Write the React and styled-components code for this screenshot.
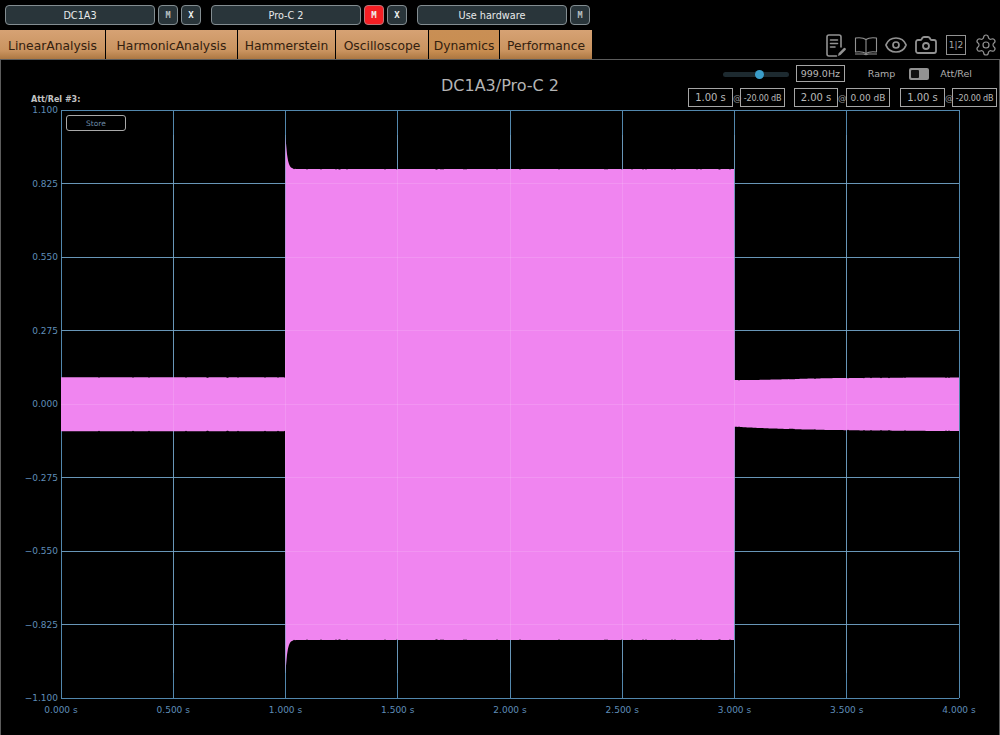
import React from "react";
import styled, { createGlobalStyle } from "styled-components";
import { Eye, Camera, Settings } from "lucide-react";

const GlobalStyle = createGlobalStyle`
  html, body {
    margin: 0;
    background: #000;
    overflow: hidden;
  }
  body {
    font-family: "DejaVu Sans", "Liberation Sans", sans-serif;
  }
`;

const Page = styled.div`
  width: 1000px;
  height: 735px;
  display: flex;
  flex-direction: column;
  background: #000;
`;

const TopBar = styled.div`
  display: flex;
  gap: 10px;
  padding: 5px 5px 0;
  height: 25px;
`;

const Group = styled.div`
  display: flex;
  gap: 3px;
`;

const WideButton = styled.div`
  box-sizing: border-box;
  width: 150px;
  height: 20px;
  display: flex;
  align-items: center;
  justify-content: center;
  background: #29353a;
  border: 1px solid #838d91;
  border-radius: 4px;
  color: #e8eaea;
  font-size: 9.7px;
  font-weight: 500;
`;

const SmallButton = styled(WideButton)`
  width: 20px;
  background: ${(p) => (p.$on ? "#f51f24" : "#29353a")};
  border-color: ${(p) => (p.$on ? "#b8777a" : "#838d91")};
  color: ${(p) => (p.$dim ? "#b9c0c2" : "#eef0f0")};
  font-family: "DejaVu Sans Mono", monospace;
  font-size: ${(p) => (p.$dim ? 8.5 : 9)}px;
  font-weight: 700;
`;

const TabBar = styled.div`
  height: 30px;
  display: flex;
  align-items: flex-start;
  justify-content: space-between;
  box-sizing: border-box;
`;

const Tabs = styled.div`
  display: flex;
  gap: 1px;
`;

const Tab = styled.div`
  box-sizing: border-box;
  width: ${(p) => p.$w}px;
  height: 30px;
  padding-top: 1px;
  display: flex;
  align-items: center;
  justify-content: center;
  color: #33200f;
  font-size: 12.3px;
  background: ${(p) =>
    p.$active
      ? "linear-gradient(#c98f55, #c88d50 70%, #a8743f)"
      : "linear-gradient(#d6a274, #c9935f 70%, #a9743f)"};
`;

const Tools = styled.div`
  display: flex;
  align-items: center;
  gap: 6px;
  height: 30px;
  padding-right: 2px;
  color: #929292;
`;

const PageIndex = styled.div`
  box-sizing: border-box;
  width: 20px;
  height: 20px;
  border: 1.5px solid #929292;
  display: flex;
  align-items: center;
  justify-content: center;
  font-size: 9px;
  color: #a5a5a5;
  margin: 0 2px;
`;

const Panel = styled.div`
  flex: 1;
  box-sizing: border-box;
  border: 1px solid #5c5c5c;
  border-bottom: none;
  margin-top: -1px;
  display: flex;
  flex-direction: column;
  min-height: 0;
`;

const Header = styled.div`
  height: 50px;
  display: grid;
  grid-template-columns: 1fr auto 1fr;
`;

const ChannelLabel = styled.div`
  align-self: end;
  padding: 0 0 6px 30px;
  font-size: 8px;
  font-weight: 700;
  color: #c4c4c4;
`;

const Title = styled.div`
  align-self: center;
  font-size: 16px;
  color: #b4b4b4;
`;

const Controls = styled.div`
  justify-self: end;
  display: flex;
  flex-direction: column;
  align-items: flex-end;
  gap: 6px;
  padding: 5px 2px 0 0;
`;

const ToneRow = styled.div`
  display: flex;
  align-items: center;
  height: 17px;
  padding-right: 25px;
  color: #aeaeae;
  font-size: 9.5px;
`;

const Track = styled.div`
  position: relative;
  width: 66px;
  height: 5px;
  border-radius: 3px;
  background: #1d2a30;
  margin: 1px 7px 0 0;
`;

const Thumb = styled.div`
  position: absolute;
  left: 32px;
  top: -2px;
  width: 9px;
  height: 9px;
  border-radius: 50%;
  background: #3a9dc9;
`;

const Field = styled.div`
  box-sizing: border-box;
  width: ${(p) => p.$w}px;
  height: ${(p) => p.$h || 19}px;
  border: 1px solid #a5a5a5;
  display: flex;
  align-items: center;
  justify-content: center;
  color: #b8b8b8;
  font-size: ${(p) => p.$size || 10}px;
  white-space: nowrap;
`;

const NarrowField = styled(Field)`
  font-family: "DejaVu Sans Condensed", "Liberation Sans Narrow", sans-serif;
  font-stretch: condensed;
  letter-spacing: -0.2px;
`;

const Caption = styled.span`
  margin: ${(p) => p.$margin};
`;

const Toggle = styled.div`
  box-sizing: border-box;
  width: 20px;
  height: 12px;
  border-radius: 2px;
  background: #929292;
  padding: 2px 0 2px 2px;
  margin-right: 11px;
`;

const ToggleKnob = styled.div`
  width: 8px;
  height: 100%;
  border-radius: 1px;
  background: #111;
`;

const ParamRow = styled.div`
  display: flex;
  align-items: center;
`;

const At = styled.span`
  width: ${(p) => p.$w || 7}px;
  text-align: center;
  font-size: 8.5px;
  color: #9a9a9a;
`;

const ChartArea = styled.div`
  position: relative;
  flex: 1;
  min-height: 0;
`;

const Store = styled.div`
  position: absolute;
  left: 65px;
  top: 5px;
  box-sizing: border-box;
  width: 60px;
  height: 16px;
  border: 1px solid #a9a9a9;
  border-radius: 3px;
  display: flex;
  align-items: center;
  justify-content: center;
  font-size: 7.5px;
  color: #6d8ba6;
`;

const ChartSvg = styled.svg`
  display: block;
  overflow: visible;
  font-family: "DejaVu Sans", sans-serif;
  font-size: 9px;
`;

const TOP_BUTTONS = [
  { name: "DC1A3", small: [{ t: "M" }, { t: "X" }] },
  { name: "Pro-C 2", small: [{ t: "M", on: true }, { t: "X" }] },
  { name: "Use hardware", small: [{ t: "M" }] },
];

const TABS = [
  ["LinearAnalysis", 105],
  ["HarmonicAnalysis", 131],
  ["Hammerstein", 97],
  ["Oscilloscope", 92],
  ["Dynamics", 70],
  ["Performance", 92],
];

const X_LINES = [61, 173.25, 285.5, 397.75, 510, 622.25, 734.5, 846.75, 959];
const X_LABELS = ["0.000 s", "0.500 s", "1.000 s", "1.500 s", "2.000 s", "2.500 s", "3.000 s", "3.500 s", "4.000 s"];
const Y_LINES = [110, 183.5, 257, 330.5, 404, 477.5, 551, 624.5, 698];
const Y_LABELS = ["1.100", "0.825", "0.550", "0.275", "0.000", "\u22120.275", "\u22120.550", "\u22120.825", "\u22121.100"];

// upper and lower edge of the signal at a given x
function edges(x) {
  if (x < 285.5) return [377.3, 431.3];
  if (x < 734.5) {
    const spike = 34 * Math.exp(-(x - 285.5) / 1.8);
    return [169 - spike, 640 + spike];
  }
  const t = (x - 734.5) / 224.5;
  const dip = 1.6 * Math.exp(-Math.pow((t - 0.07) / 0.25, 2));
  return [378.4 - t + dip, 426.7 + 4.5 * (1 - Math.exp(-t * 3))];
}

function wavePath() {
  const top = [];
  const bottom = [];
  let seed = 7;
  const rnd = () => {
    seed = (seed * 16807) % 2147483647;
    return seed / 2147483647;
  };
  for (let x = 61; x <= 959; x += 1) {
    const [t, b] = edges(x);
    const jitter = rnd() > 0.93 ? 0.5 : 0;
    top.push(`${x},${(t + jitter).toFixed(1)}`);
    bottom.unshift(`${x},${(b - jitter).toFixed(1)}`);
    if (x === 285 || x === 734) {
      const [nt, nb] = edges(x + 0.6);
      top.push(`${x + 0.6},${nt.toFixed(1)}`);
      bottom.unshift(`${x + 0.6},${nb.toFixed(1)}`);
    }
  }
  return `M${top.join("L")}L${bottom.join("L")}Z`;
}

function NotesIcon() {
  return (
    <svg width="22" height="24" viewBox="0 0 22 24" fill="none" stroke="currentColor" strokeWidth="1.6" strokeLinecap="round" strokeLinejoin="round">
      <path d="M10.500 23H3a2 2 0 0 1-2-2V4a2 2 0 0 1 2-2h10a2 2 0 0 1 2 2v10" />
      <path d="M4.500 7h7M4.500 10.500h7M4.500 14h4.500" />
      <path d="M12 23l.6-2.800 5-5a1.300 1.300 0 0 1 1.900 1.900l-5 5z" fill="currentColor" stroke="none" />
    </svg>
  );
}

function BookIcon() {
  return (
    <svg width="24" height="24" viewBox="0 0 24 24" fill="none" stroke="currentColor" strokeWidth="1.1" strokeLinejoin="round">
      <path d="M12 6.500C10 5 6 4.500 1.500 5v14c4.500-.5 8.500 0 10.500 1.500 2-1.500 6-2 10.500-1.500V5C18 4.500 14 5 12 6.500z" />
      <path d="M12 6.500v14" />
      <path d="M1 21h8.500l2.500.7 2.500-.7H23" />
    </svg>
  );
}

function Chart() {
  return (
    <ChartSvg width="998" height="625" viewBox="1 110 998 625">
      <g stroke="#5287ad" strokeWidth="1" shapeRendering="crispEdges">
        {X_LINES.map((x) => (
          <line key={x} x1={x} y1="110" x2={x} y2="698" />
        ))}
        {Y_LINES.map((y) => (
          <line key={y} x1="61" y1={y} x2="959" y2={y} />
        ))}
      </g>
      <path d={wavePath()} fill="#f085f0" />
      <g stroke="#ffffff" strokeOpacity="0.13" strokeWidth="1" shapeRendering="crispEdges">
        {X_LINES.slice(1, 8).map((x) => (
          <line key={x} x1={x} y1="135" x2={x} y2="673" />
        ))}
        {Y_LINES.slice(1, 8).map((y) => (
          <line key={y} x1="61" y1={y} x2="959" y2={y} />
        ))}
      </g>
      <g fill="#5f8db8">
        {Y_LABELS.map((label, i) => (
          <text key={label} x="58" y={Y_LINES[i] + 3} textAnchor="end">
            {label}
          </text>
        ))}
        {X_LABELS.map((label, i) => (
          <text key={label} x={X_LINES[i]} y="713" textAnchor="middle">
            {label}
          </text>
        ))}
      </g>
    </ChartSvg>
  );
}

export default function App() {
  return (
    <Page>
      <GlobalStyle />
      <TopBar>
        {TOP_BUTTONS.map((group) => (
          <Group key={group.name}>
            <WideButton>{group.name}</WideButton>
            {group.small.map((b) => (
              <SmallButton key={b.t} $on={b.on} $dim={b.t === "M" && !b.on}>
                {b.t}
              </SmallButton>
            ))}
          </Group>
        ))}
      </TopBar>
      <TabBar>
        <Tabs>
          {TABS.map(([name, w]) => (
            <Tab key={name} $w={w} $active={name === "Dynamics"}>
              {name}
            </Tab>
          ))}
        </Tabs>
        <Tools>
          <NotesIcon />
          <BookIcon />
          <Eye size={24} strokeWidth={1.7} />
          <Camera size={24} strokeWidth={1.8} />
          <PageIndex>1|2</PageIndex>
          <Settings size={24} strokeWidth={1.2} />
        </Tools>
      </TabBar>
      <Panel>
        <Header>
          <ChannelLabel>Att/Rel #3:</ChannelLabel>
          <Title>DC1A3/Pro-C 2</Title>
          <Controls>
            <ToneRow>
              <Track>
                <Thumb />
              </Track>
              <Field $w={49} $h={17} $size={9.5}>999.0Hz</Field>
              <Caption $margin="0 14px 0 23px">Ramp</Caption>
              <Toggle>
                <ToggleKnob />
              </Toggle>
              <Caption>Att/Rel</Caption>
            </ToneRow>
            <ParamRow>
              <Field $w={45}>1.00 s</Field>
              <At>@</At>
              <NarrowField $w={45} $size={9}>-20.00 dB</NarrowField>
              <At $w={9} />
              <Field $w={44}>2.00 s</Field>
              <At $w={8}>@</At>
              <Field $w={44} $size={9}>0.00 dB</Field>
              <At $w={10} />
              <Field $w={45}>1.00 s</Field>
              <At>@</At>
              <NarrowField $w={45} $size={9}>-20.00 dB</NarrowField>
            </ParamRow>
          </Controls>
        </Header>
        <ChartArea>
          <Chart />
          <Store>Store</Store>
        </ChartArea>
      </Panel>
    </Page>
  );
}
